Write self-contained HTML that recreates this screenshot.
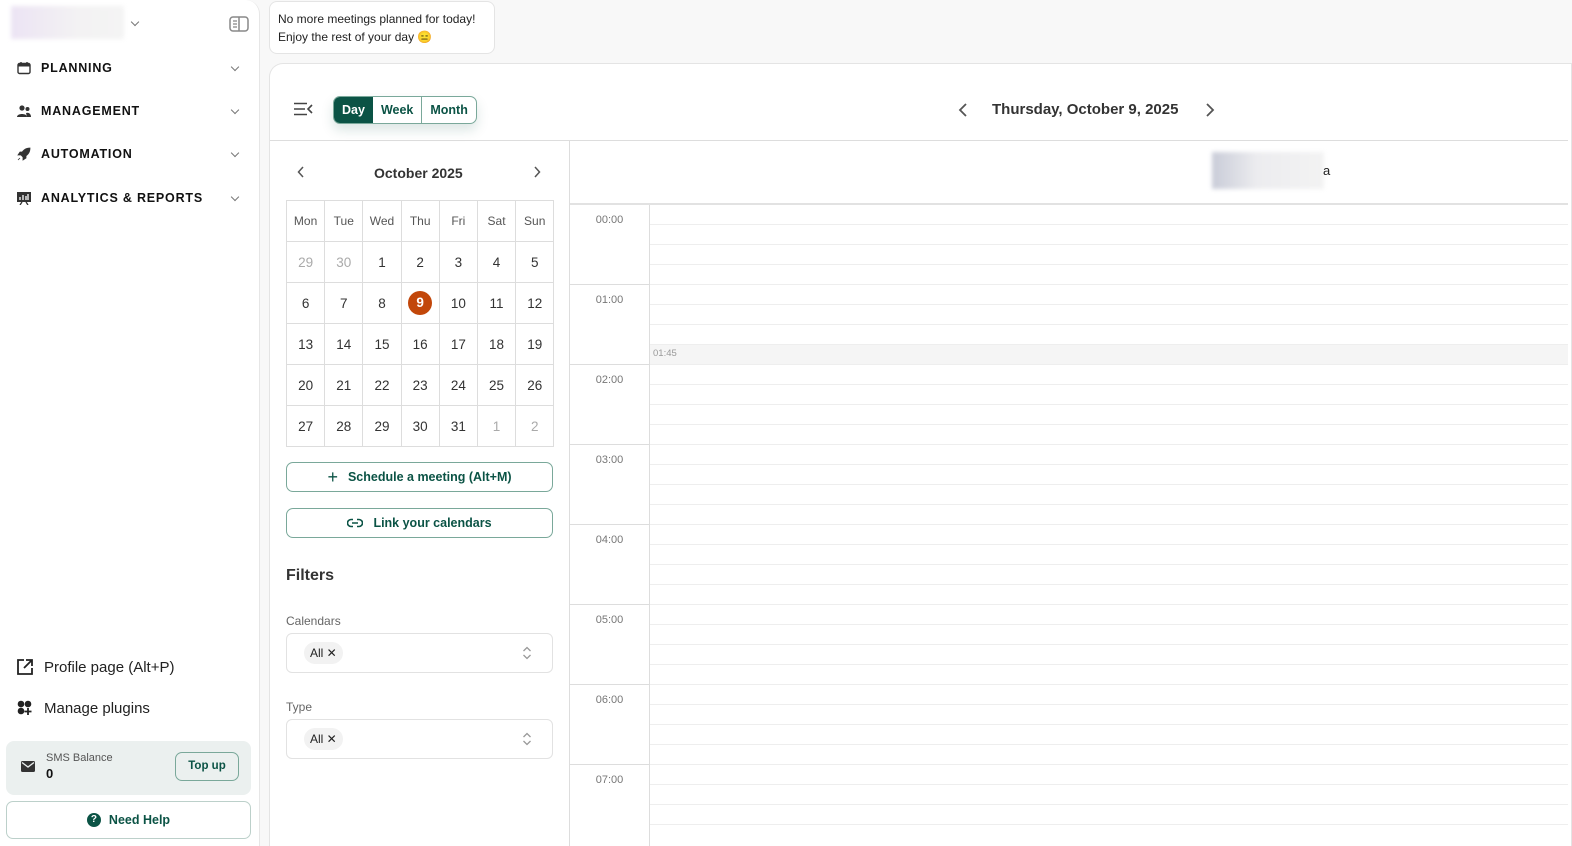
<!DOCTYPE html>
<html><head><meta charset="utf-8"><style>
*{box-sizing:border-box;margin:0;padding:0}
html,body{width:1572px;height:846px;overflow:hidden}
body{background:#f8f8f8;font-family:"Liberation Sans","Noto Sans CJK JP",sans-serif;color:#222;position:relative}
.sb{position:absolute;left:0;top:0;width:260px;height:846px;background:#fff;border-right:1px solid #e6e6e6;border-top-right-radius:14px}
.abs{position:absolute}
.nav{position:absolute;left:17px;font-size:12.5px;font-weight:bold;letter-spacing:0.8px;color:#111;display:flex;align-items:center;gap:10px}
.chev{position:absolute;left:232px;width:6px;height:6px;border-right:1.3px solid #777;border-bottom:1.3px solid #777;transform:rotate(45deg)}
.notif{position:absolute;left:269px;top:1px;width:226px;height:53px;background:#fff;border:1px solid #e4e4e4;border-radius:8px;font-size:12px;line-height:18px;padding:8px 8px;color:#222}
.card{position:absolute;left:269px;top:63px;width:1303px;height:783px;background:#fff;border:1px solid #e4e4e4;border-bottom:none;border-top-left-radius:14px}
.seg{position:absolute;left:333px;top:96px;height:28px;display:flex;border:1px solid #7aa89a;border-radius:7px;font-size:12.5px;font-weight:bold;color:#0b5345;overflow:hidden}
.seg div{padding:0 8px;line-height:26px}
.grid{position:absolute;left:286px;top:200px;border-collapse:collapse}
.grid td{width:38.2px;height:41px;border:1px solid #ddd;text-align:center;font-size:13.5px;color:#333}
.grid tr:first-child td{font-size:12px;color:#555}
.btn{position:absolute;left:286px;width:267px;height:30px;border:1px solid #7aa89a;border-radius:7px;color:#0b5345;font-size:12.5px;font-weight:bold;display:flex;align-items:center;justify-content:center;gap:10px}
.sel{position:absolute;left:286px;width:267px;height:40px;border:1px solid #e2e2e2;border-radius:6px}
.chip{position:absolute;left:17px;top:8px;height:22px;padding:0 6px;background:#f2f2f2;border-radius:11px;font-size:12px;line-height:22px;color:#222}
.updown{position:absolute;right:20px;top:12px}
.lbl{position:absolute;left:286px;font-size:12px;color:#666}
.tg{position:absolute;left:569px;width:81px;height:80px;border:1px solid #ddd;border-top:none;font-size:11px;color:#777;text-align:center;padding-top:9px}
.hl{position:absolute;left:650px;width:918px;height:1px;background:#eee}
</style></head><body>
<div class="sb">
 <div class="abs" style="left:11px;top:6px;width:113px;height:33px;background:linear-gradient(90deg,#ece4f4,#f3f2f3 60%,#f4f4f4);filter:blur(2px)"></div>
 <div class="chev" style="left:132px;top:19px"></div>
 <svg class="abs" style="left:229px;top:16px" width="20" height="16" viewBox="0 0 20 16"><rect x="1" y="1" width="18" height="14" rx="3" fill="none" stroke="#888" stroke-width="1.5"/><line x1="10" y1="1" x2="10" y2="15" stroke="#888" stroke-width="1.5"/><path d="M4 5h4M4 8h4M4 11h4" stroke="#888" stroke-width="1.3"/></svg>
 <div class="nav" style="top:61px"><svg width="14" height="14" viewBox="0 0 14 14"><rect x="1" y="2.5" width="12" height="10" rx="1.5" fill="none" stroke="#333" stroke-width="1.4"/><rect x="1" y="2.5" width="12" height="3" fill="#333"/><path d="M4 1v3M10 1v3" stroke="#333" stroke-width="1.4"/></svg>PLANNING</div><div class="chev" style="top:64px"></div>
 <div class="nav" style="top:104px"><svg width="14" height="14" viewBox="0 0 14 14"><circle cx="5" cy="4" r="2.6" fill="#333"/><circle cx="10.5" cy="5" r="2" fill="#333"/><path d="M0 13c0-4 10-4 10 0z" fill="#333"/><path d="M9 9c3-1 5 1 5 4h-4" fill="#333"/></svg>MANAGEMENT</div><div class="chev" style="top:107px"></div>
 <div class="nav" style="top:147px"><svg width="14" height="14" viewBox="0 0 14 14"><path d="M13 1C8 1 5 4 4 8l2 2c4-1 7-4 7-9z M4 8L1 8 3 5h3z M6 10v3l3-2V8z M3 11l-2 2" fill="#333" stroke="#333" stroke-width=".8"/></svg>AUTOMATION</div><div class="chev" style="top:150px"></div>
 <div class="nav" style="top:191px"><svg width="14" height="14" viewBox="0 0 14 14"><rect x="0" y="1" width="14" height="10" fill="#333"/><path d="M3 9V6M6 9V4M9 9V5M11 9V3" stroke="#fff" stroke-width="1.3"/><path d="M5 11l-2 3M9 11l2 3" stroke="#333" stroke-width="1.3"/></svg>ANALYTICS &amp; REPORTS</div><div class="chev" style="top:194px"></div>
 <div class="abs" style="left:16px;top:658px;display:flex;gap:10px;font-size:15px;color:#222;align-items:center"><svg width="18" height="18" viewBox="0 0 18 18"><path d="M8 2H2v14h14v-6" fill="none" stroke="#222" stroke-width="1.8"/><path d="M10 2h6v6M16 2L8 10" fill="none" stroke="#222" stroke-width="1.8"/></svg>Profile page (Alt+P)</div>
 <div class="abs" style="left:16px;top:699px;display:flex;gap:10px;font-size:15px;color:#222;align-items:center"><svg width="18" height="18" viewBox="0 0 18 18"><circle cx="5" cy="5" r="3.3" fill="#222"/><circle cx="12" cy="5" r="3.3" fill="#222"/><circle cx="5" cy="12" r="3.3" fill="#222"/><path d="M12 9v7M8.5 12.5h7" stroke="#222" stroke-width="1.8"/></svg>Manage plugins</div>
 <div class="abs" style="left:6px;top:741px;width:245px;height:54px;background:#ebf0ef;border-radius:8px">
  <svg class="abs" style="left:15px;top:20px" width="14" height="11" viewBox="0 0 14 11"><rect width="14" height="11" rx="1.5" fill="#333"/><path d="M1 1.5l6 4.5 6-4.5" fill="none" stroke="#ebf0ef" stroke-width="1.3"/></svg>
  <div class="abs" style="left:40px;top:11px;font-size:11px;color:#555">SMS Balance</div>
  <div class="abs" style="left:40px;top:25px;font-size:13px;font-weight:bold;color:#111">0</div>
  <div class="abs" style="left:169px;top:11px;width:64px;height:29px;border:1px solid #7aa89a;border-radius:7px;font-size:11.5px;font-weight:bold;color:#0b5345;text-align:center;line-height:27px">Top up</div>
 </div>
 <div class="abs" style="left:6px;top:801px;width:245px;height:38px;border:1px solid #bcd0ca;border-radius:7px;display:flex;align-items:center;justify-content:center;gap:8px;font-size:12.5px;font-weight:bold;color:#0b5345"><span style="width:14px;height:14px;border-radius:7px;background:#0b5345;color:#fff;font-size:10px;line-height:14px;text-align:center">?</span>Need Help</div>
</div>
<div class="notif">No more meetings planned for today!<br>Enjoy the rest of your day 😑</div>
<div class="card"></div>
<div class="abs" style="left:270px;top:140px;width:1298px;height:1px;background:#ddd"></div>
<div class="abs" style="left:569px;top:141px;width:1px;height:705px;background:#ddd"></div>
<div class="abs" style="left:570px;top:203px;width:998px;height:2px;background:#e2e2e2"></div>
<svg class="abs" style="left:293px;top:102px" width="20" height="14" viewBox="0 0 20 14"><path d="M1 1.5h13M1 7h11M1 12.5h13M19 3l-4 4 4 4" fill="none" stroke="#444" stroke-width="1.6"/></svg>
<div class="seg" style="box-shadow:0 6px 12px rgba(11,83,69,.15)"><div style="background:#0b5345;color:#fff">Day</div><div style="border-right:1px solid #7aa89a">Week</div><div>Month</div></div>
<svg class="abs" style="left:958px;top:103px" width="10" height="14"><path d="M8 1L2 7l6 6" fill="none" stroke="#555" stroke-width="1.8"/></svg>
<div class="abs" style="left:992px;top:101px;font-size:15px;font-weight:bold;color:#333">Thursday, October 9, 2025</div>
<svg class="abs" style="left:1205px;top:103px" width="10" height="14"><path d="M2 1l6 6-6 6" fill="none" stroke="#555" stroke-width="1.8"/></svg>
<svg class="abs" style="left:297px;top:166px" width="8" height="12"><path d="M6 1L1.5 6 6 11" fill="none" stroke="#555" stroke-width="1.5"/></svg>
<div class="abs" style="left:374px;top:165px;font-size:14px;font-weight:bold;color:#333">October 2025</div>
<svg class="abs" style="left:533px;top:166px" width="8" height="12"><path d="M2 1l4.5 5L2 11" fill="none" stroke="#555" stroke-width="1.5"/></svg>
<table class="grid">
<tr><td>Mon</td><td>Tue</td><td>Wed</td><td>Thu</td><td>Fri</td><td>Sat</td><td>Sun</td></tr>
<tr><td style="color:#aaa">29</td><td style="color:#aaa">30</td><td>1</td><td>2</td><td>3</td><td>4</td><td>5</td></tr>
<tr><td>6</td><td>7</td><td>8</td><td><span style="display:inline-block;width:24px;height:24px;border-radius:12px;background:#c2470a;color:#fff;font-weight:bold;line-height:24px">9</span></td><td>10</td><td>11</td><td>12</td></tr>
<tr><td>13</td><td>14</td><td>15</td><td>16</td><td>17</td><td>18</td><td>19</td></tr>
<tr><td>20</td><td>21</td><td>22</td><td>23</td><td>24</td><td>25</td><td>26</td></tr>
<tr><td>27</td><td>28</td><td>29</td><td>30</td><td>31</td><td style="color:#aaa">1</td><td style="color:#aaa">2</td></tr>
</table>
<div class="btn" style="top:462px"><span style="font-size:18px;font-weight:normal">+</span>Schedule a meeting (Alt+M)</div>
<div class="btn" style="top:508px"><svg width="16" height="10" viewBox="0 0 16 10"><path d="M6 1.5H4a3.5 3.5 0 000 7h2M10 1.5h2a3.5 3.5 0 010 7h-2M5 5h6" fill="none" stroke="#0b5345" stroke-width="1.6"/></svg>Link your calendars</div>
<div class="abs" style="left:286px;top:567px;font-size:16px;font-weight:bold;color:#333">Filters</div>
<div class="lbl" style="top:614px">Calendars</div>
<div class="sel" style="top:633px"><div class="chip">All ✕</div><svg class="updown" width="10" height="14" viewBox="0 0 10 14"><path d="M1.5 5L5 1.5 8.5 5M1.5 9L5 12.5 8.5 9" fill="none" stroke="#999" stroke-width="1.3"/></svg></div>
<div class="lbl" style="top:700px">Type</div>
<div class="sel" style="top:719px"><div class="chip">All ✕</div><svg class="updown" width="10" height="14" viewBox="0 0 10 14"><path d="M1.5 5L5 1.5 8.5 5M1.5 9L5 12.5 8.5 9" fill="none" stroke="#999" stroke-width="1.3"/></svg></div>
<div class="abs" style="left:1212px;top:152px;width:112px;height:37px;background:linear-gradient(90deg,#c9ccd8,#ececef 40%,#f3f3f3);filter:blur(2px)"></div>
<div class="abs" style="left:1323px;top:163px;font-size:13px;color:#222">a</div>
<div class="abs" style="left:650px;top:344px;width:918px;height:20px;background:#f5f5f5;font-size:9.5px;color:#999;padding:4px 3px">01:45</div>
<div class="tg" style="top:205px">00:00</div><div class="tg" style="top:285px">01:00</div><div class="tg" style="top:365px">02:00</div><div class="tg" style="top:445px">03:00</div><div class="tg" style="top:525px">04:00</div><div class="tg" style="top:605px">05:00</div><div class="tg" style="top:685px">06:00</div><div class="tg" style="top:765px;height:90px">07:00</div>
<div class="hl" style="top:224px"></div><div class="hl" style="top:244px"></div><div class="hl" style="top:264px"></div><div class="hl" style="top:284px"></div><div class="hl" style="top:304px"></div><div class="hl" style="top:324px"></div><div class="hl" style="top:344px"></div><div class="hl" style="top:364px"></div><div class="hl" style="top:384px"></div><div class="hl" style="top:404px"></div><div class="hl" style="top:424px"></div><div class="hl" style="top:444px"></div><div class="hl" style="top:464px"></div><div class="hl" style="top:484px"></div><div class="hl" style="top:504px"></div><div class="hl" style="top:524px"></div><div class="hl" style="top:544px"></div><div class="hl" style="top:564px"></div><div class="hl" style="top:584px"></div><div class="hl" style="top:604px"></div><div class="hl" style="top:624px"></div><div class="hl" style="top:644px"></div><div class="hl" style="top:664px"></div><div class="hl" style="top:684px"></div><div class="hl" style="top:704px"></div><div class="hl" style="top:724px"></div><div class="hl" style="top:744px"></div><div class="hl" style="top:764px"></div><div class="hl" style="top:784px"></div><div class="hl" style="top:804px"></div><div class="hl" style="top:824px"></div>
</body></html>
